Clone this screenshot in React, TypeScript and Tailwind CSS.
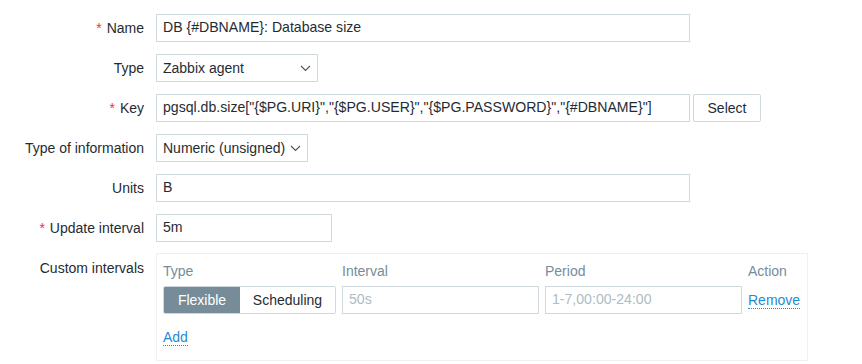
import React from 'react';

// ── Small pieces ──────────────────────────────────────────────────────────────

function Label({ text, required }: { text: string; required?: boolean }) {
  return (
    <div className="flex h-[28px] items-center justify-end whitespace-nowrap text-[14px] text-[#1f2c33]">
      {required && <span className="mr-[5px] text-[#e33734]">*</span>}
      {text}
    </div>
  );
}

function Input({ value, width, placeholder }: { value?: string; width: string; placeholder?: boolean }) {
  return (
    <div
      className={`flex h-[28px] items-center border border-[#cfd8dc] bg-white px-[6px] text-[14.1px] whitespace-nowrap ${width} ${
        placeholder ? 'text-[#aebcc3]' : 'text-[#1f2c33]'
      }`}
    >
      {value}
    </div>
  );
}

function Chevron() {
  return (
    <svg width="11" height="7" viewBox="0 0 11 7" className="shrink-0">
      <path d="M1 1 L5.5 5.5 L10 1" fill="none" stroke="#4f5b62" strokeWidth="1.2" />
    </svg>
  );
}

function Select({ value, width }: { value: string; width: string }) {
  return (
    <div className={`flex h-[28px] items-center justify-between gap-[4px] border border-[#cfd8dc] bg-white pl-[6px] pr-[6px] text-[14px] text-[#1f2c33] whitespace-nowrap ${width}`}>
      <span>{value}</span>
      <Chevron />
    </div>
  );
}

// ── Page ──────────────────────────────────────────────────────────────────────

export default function App() {
  return (
    <div className="h-[364px] w-[862px] bg-white pt-[14px] font-['Liberation_Sans',Arial,sans-serif]">
      <div className="grid grid-cols-[144px_auto] gap-x-[12px] gap-y-[12px]">
        <Label text="Name" required />
        <Input value="DB {#DBNAME}: Database size" width="w-[534px]" />

        <Label text="Type" />
        <Select value="Zabbix agent" width="w-[162px]" />

        <Label text="Key" required />
        <div className="flex gap-[3px]">
          <Input value={'pgsql.db.size["{$PG.URI}","{$PG.USER}","{$PG.PASSWORD}","{#DBNAME}"]'} width="w-[534px]" />
          <button className="h-[28px] w-[68px] rounded-[2px] border border-[#cfd8dc] bg-white text-[14px] text-[#1f2c33]">
            Select
          </button>
        </div>

        <Label text="Type of information" />
        <Select value="Numeric (unsigned)" width="w-[152px]" />

        <Label text="Units" />
        <Input value="B" width="w-[534px]" />

        <Label text="Update interval" required />
        <Input value="5m" width="w-[176px]" />

        <div className="flex justify-end pt-[4px] text-[14px] text-[#1f2c33]">Custom intervals</div>
        <div className="-mt-[1px] w-[652px] border border-[#eef1f3] px-[6px] pt-[9px] pb-[12px] text-[14px]">
          <div className="grid grid-cols-[173px_197px_197px_auto] gap-x-[6px] text-[#768d99]">
            <div className="h-[16px] leading-[16px]">Type</div>
            <div className="h-[16px] leading-[16px]">Interval</div>
            <div className="h-[16px] leading-[16px]">Period</div>
            <div className="h-[16px] leading-[16px]">Action</div>
          </div>
          <div className="mt-[7px] grid grid-cols-[173px_197px_197px_auto] items-center gap-x-[6px]">
            <div className="flex h-[28px] overflow-hidden rounded-[2px] border border-[#cfd8dc]">
              <div className="flex w-[76px] items-center justify-center bg-[#768d99] text-white">Flexible</div>
              <div className="flex flex-1 items-center justify-center bg-white text-[#1f2c33]">Scheduling</div>
            </div>
            <Input value="50s" width="w-[197px]" placeholder />
            <Input value="1-7,00:00-24:00" width="w-[197px]" placeholder />
            <span className="w-fit border-b border-dotted border-[#1f8bd0] leading-[16px] text-[#1f8bd0]">Remove</span>
          </div>
          <div className="mt-[13px]">
            <span className="border-b border-dotted border-[#1f8bd0] leading-[16px] text-[#1f8bd0]">Add</span>
          </div>
        </div>
      </div>
    </div>
  );
}
